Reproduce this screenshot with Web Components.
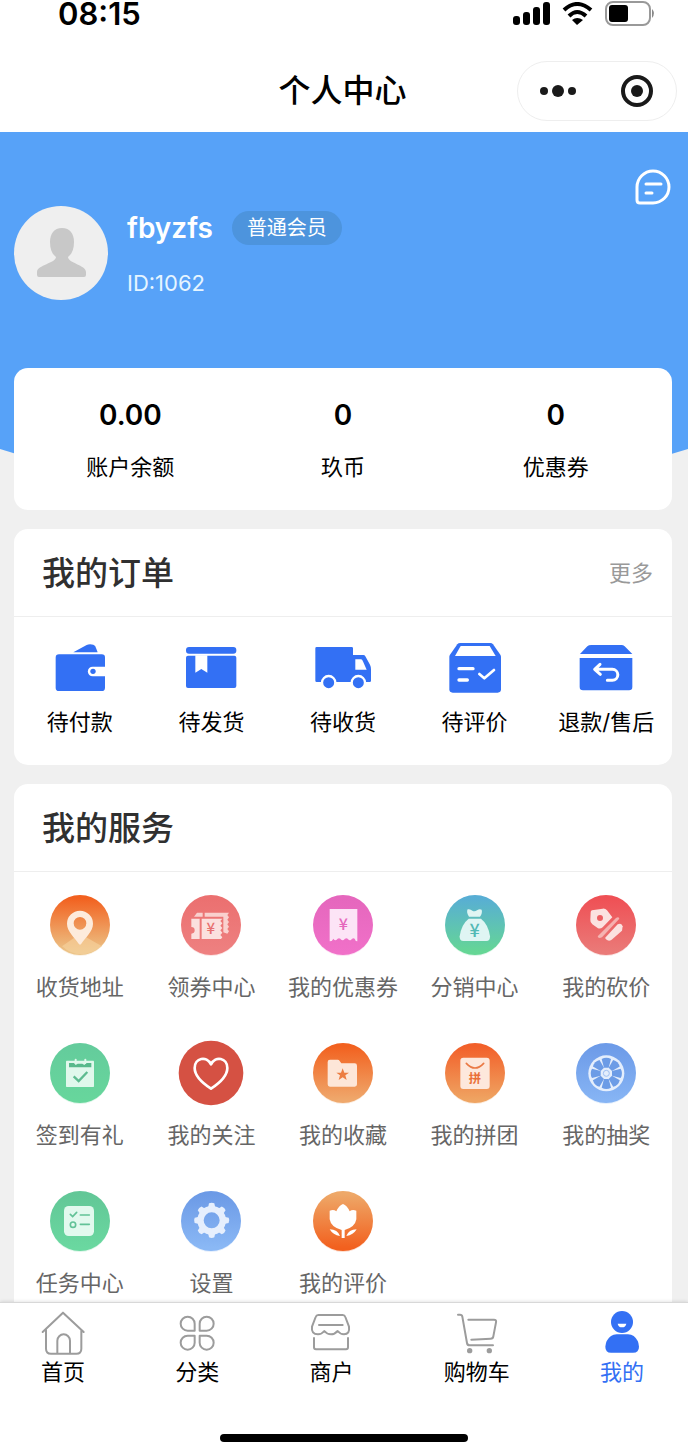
<!DOCTYPE html>
<html lang="zh-CN">
<head>
<meta charset="utf-8">
<meta name="viewport" content="width=device-width, initial-scale=1">
<title>个人中心</title>
<style>
  body { margin: 0; background: #f0f0f0; font-family: Inter, "Noto Sans CJK SC", sans-serif; color: #000; }
</style>
</head>
<body>
<member-page>
  <status-bar slot="top" time="08:15"></status-bar>
  <nav-bar slot="top">个人中心</nav-bar>

  <member-hero name="fbyzfs" level="普通会员" uid="1062">
    <stat-item value="0.00">账户余额</stat-item>
    <stat-item value="0">玖币</stat-item>
    <stat-item value="0">优惠券</stat-item>
  </member-hero>

  <panel-card heading="我的订单" more="更多">
    <icon-link kind="order" icon="pay">待付款</icon-link>
    <icon-link kind="order" icon="ship">待发货</icon-link>
    <icon-link kind="order" icon="receive">待收货</icon-link>
    <icon-link kind="order" icon="review">待评价</icon-link>
    <icon-link kind="order" icon="refund">退款/售后</icon-link>
  </panel-card>

  <panel-card class="last" heading="我的服务">
    <icon-link icon="address">收货地址</icon-link>
    <icon-link icon="tickets">领券中心</icon-link>
    <icon-link icon="coupon">我的优惠券</icon-link>
    <icon-link icon="bag">分销中心</icon-link>
    <icon-link icon="bargain">我的砍价</icon-link>
    <icon-link icon="signin">签到有礼</icon-link>
    <icon-link icon="heart">我的关注</icon-link>
    <icon-link icon="folder">我的收藏</icon-link>
    <icon-link icon="group">我的拼团</icon-link>
    <icon-link icon="wheel">我的抽奖</icon-link>
    <icon-link icon="tasks">任务中心</icon-link>
    <icon-link icon="gear">设置</icon-link>
    <icon-link icon="tulip">我的评价</icon-link>
  </panel-card>

  <tab-bar slot="bottom">
    <tab-item icon="home">首页</tab-item>
    <tab-item icon="category">分类</tab-item>
    <tab-item icon="shop">商户</tab-item>
    <tab-item icon="cart">购物车</tab-item>
    <tab-item icon="me" active>我的</tab-item>
  </tab-bar>
</member-page>

<script>
const B = '#3370f4';

const spin = (n, cx, cy, shape, start = 0) =>
  Array.from({ length: n }, (_, i) => `<g transform="rotate(${start + i * 360 / n} ${cx} ${cy})">${shape}</g>`).join('');

/* Plain glyphs: viewBox and artwork */
const GLYPHS = {
  pay: ['150 354 180 180', `<g fill="${B}"><path d="M220 397L260 375Q268 371 280 374Q287 376 288 384L293 397Z"/><rect x="167" y="403" width="148" height="110" rx="10"/></g><path fill="#fff" d="M317 440H278a14 14 0 0 0 0 29H317Z"/><circle cx="279" cy="454" r="8" fill="${B}"/>`],
  ship: ['546 354 180 180', `<g fill="${B}"><rect x="561" y="381" width="151" height="20" rx="9"/><rect x="561" y="407" width="151" height="97" rx="6"/></g><path fill="#fff" d="M589 406H625V458L607 447L589 458Z"/>`],
  receive: ['941 354 180 180', `<path fill="${B}" d="M952 381H1057Q1061 381 1061 385V405H1092Q1096 405 1098 409L1112 434Q1115 440 1115 448V482Q1115 486 1111 486H952Q948 486 948 482V385Q948 381 952 381Z"/><path fill="#fff" d="M1068 418H1084Q1088 418 1090 422L1102 449H1068Z"/><g fill="${B}" stroke="#fff" stroke-width="7"><circle cx="988" cy="488" r="20"/><circle cx="1077" cy="488" r="20"/></g>`],
  review: ['302 354 180 180', `<path fill="${B}" d="M348 369H438Q443 369 446 373L468 404Q470 407 470 411V508Q470 518 460 518H325Q315 518 315 508V411Q315 407 317 404L339 373Q342 369 348 369Z"/><path fill="#fff" d="M349 378H436L454 408H332Z"/><g fill="none" stroke="#fff" stroke-width="10" stroke-linecap="round" stroke-linejoin="round"><path d="M344 446H386M344 480H369"/><path stroke-width="8" d="M405 462L420 475L449 450"/></g>`],
  refund: ['694 354 180 180', `<g fill="${B}"><path d="M740 375H830Q836 375 840 379L863 402H706L728 379Q732 375 740 375Z"/><path d="M705 414H863V501Q863 511 853 511H715Q705 511 705 501Z"/></g><g fill="none" stroke="#fff" stroke-width="9" stroke-linecap="round" stroke-linejoin="round"><path d="M766 433L750 448L767 463M752 448H803a16 16 0 0 1 0 33H788"/></g>`],
  home: ['118 60 144 144', `<g fill="none" stroke="#9c9c9c" stroke-width="6" stroke-linecap="round" stroke-linejoin="round"><path d="M129 126L190 68L252 126M139 120V176Q139 191 154 191H230Q245 191 245 176V120M173 190V152a19 19 0 0 1 38 0V190"/></g>`],
  category: ['522 60 144 144', `<g fill="none" stroke="#9c9c9c" stroke-width="6" stroke-linejoin="round"><path d="M587 122H566a21 21 0 1 1 21-21ZM602 122H623a21 21 0 1 0-21-21ZM587 137H566a21 21 0 1 0 21 21ZM602 137H623a21 21 0 1 1-21 21Z"/></g>`],
  shop: ['924 60 144 144', `<g fill="none" stroke="#9c9c9c" stroke-width="6" stroke-linecap="round" stroke-linejoin="round"><path d="M958 75H1031Q1037 75 1039 81L1050 110Q1053 133 1035 133Q1024 133 1016 123Q1007 133 996 133Q984 133 976 123Q968 133 957 133Q936 133 939 110L950 81Q952 75 958 75ZM960 105H1031M945 144V172Q945 178 951 178H1041Q1047 178 1047 172V144"/></g>`],
  cart: ['328 60 144 144', `<g fill="none" stroke="#9c9c9c" stroke-width="6" stroke-linecap="round" stroke-linejoin="round"><path d="M343 74H349Q355 74 356 80L370 159Q371 166 378 166H448M374 89H451Q459 89 457 97L449 139Q448 146 441 146L383 149"/></g><g fill="#9c9c9c"><circle cx="378" cy="182" r="8"/><circle cx="437" cy="182" r="8"/></g>`],
  me: ['760 60 144 144', `<g fill="${B}"><circle cx="832" cy="96" r="33"/><path d="M782 170Q783 150 799 138Q806 133 816 133H850Q860 133 867 138Q882 150 883 170Q883 188 865 188H799Q782 188 782 170Z"/></g><path fill="#fff" d="M819 101H845Q843 112 832 112Q821 112 819 101Z"/>`]
};

/* Round badges: left, top, upper colour, lower colour, artwork */
const BADGES = {
  address: [141, 337, '#f2611f', '#ecc488', `<path fill="#f6d3a0" opacity=".6" d="M186 500L240 462L306 500Q240 548 186 500Z"/><path fill="#fdebdc" fill-rule="evenodd" d="M240 393a39 39 0 0 1 39 39c0 24-24 42-35 60q-4 5-8 0c-11-18-35-36-35-60a39 39 0 0 1 39-39ZM240 412a19 19 0 1 0 0 38a19 19 0 1 0 0-38Z"/>`],
  tickets: [535, 337, '#eb7070', '#ee8080', `<g fill="#fbe0de"><path d="M583 411L592 399H609V411ZM615 399H688l-5 7 5 7-5 7 5 7-5 7 5 7-5 7 5 7-5 7-12-4V411H615Z" opacity=".85"/><path d="M575 417H600V478H575V462a8 8 0 0 0 0-20ZM606 417H668l-6 7 6 7-6 7 6 7-6 7 6 7-6 7 6 7-4 5H606Z"/></g><text x="633" y="464" font-size="45" font-weight="500" text-anchor="middle" fill="#e87070">¥</text>`],
  coupon: [929, 337, '#e567bd', '#f070c8', `<path fill="#fce4f6" d="M988 388H1071V485q-6 0-8-8q-6-4-11 4q-5 2-10-4q-6-4-12 4q-5 2-10-4q-6-4-12 4q-5 2-9-4q-3 8-11 8Z"/><text x="1029" y="450" font-size="48" font-weight="500" text-anchor="middle" fill="#e567bd">¥</text>`],
  bag: [123, 337, '#58aed4', '#65d695', `<g fill="#dff5f3"><path d="M200 389Q208 387 214 393Q221 397 228 392Q236 386 242 390Q245 400 237 411H204Q195 398 200 389Z"/><path d="M203 417H240Q262 434 267 470Q268 484 256 484H187Q175 484 176 470Q181 434 203 417Z"/></g><text x="221" y="473" font-size="54" font-weight="500" text-anchor="middle" fill="#53b9b5">¥</text>`],
  bargain: [517, 337, '#ef5055', '#ea7a78', `<g fill="#fbe2e0"><path fill-rule="evenodd" d="M574 392L606 387Q614 386 619 392L635 413L606 443Q600 448 592 446L575 434Q568 428 569 420L570 398Q570 393 574 392ZM598 406a9 9 0 1 0 0 18a9 9 0 1 0 0-18Z"/><path opacity=".6" d="M591 470L646 415Q654 410 656 417L604 473Q592 478 591 470Z"/><path d="M613 475L651 434Q663 428 666 440L664 453L632 481Q621 487 613 475Z"/></g>`],
  signin: [141, 60, '#64cc9c', '#67d69c', `<g fill="#e0f8ec"><rect x="198" y="122" width="84" height="79" rx="2"/></g><path fill="#58b98c" d="M207 129H222l5 6 6-4H247l6 4 6-6H274V142H207Z"/><g fill="#e0f8ec"><rect x="224" y="116" width="6" height="16" rx="3"/><rect x="253" y="116" width="6" height="16" rx="3"/></g><path d="M221 169L236 183L262 156" fill="none" stroke="#5dbb90" stroke-width="7"/>`],
  heart: [536, 60, '#d55143', '#d55143', `<path fill="none" stroke="#fff" stroke-width="8" stroke-linejoin="round" d="M635 206C612 191 586 168 586 144C586 114 622 106 635 133C648 106 684 114 684 144C684 168 658 191 635 206Z"/>`],
  folder: [929, 60, '#f2611f', '#efa86c', `<path fill="#fde6d8" d="M982 126Q982 119 989 119H1012Q1016 119 1018 123L1023 130H1063Q1070 130 1070 137V193Q1070 200 1063 200H989Q982 200 982 193Z"/><path fill="#ec7d42" d="M1027 145l5 13h14l-11 8 4 14-12-8-12 8 4-14-11-8h14Z"/>`],
  group: [123, 60, '#f2602a', '#efa462', `<rect x="178" y="113" width="88" height="94" rx="9" fill="#fde8dc"/><path d="M196 130Q222 158 248 130" fill="none" stroke="#ea7a45" stroke-width="5" stroke-linecap="round"/><text x="222" y="190" font-size="37" font-weight="700" text-anchor="middle" fill="#ea6f38">拼</text>`],
  wheel: [519, 60, '#6d9be8', '#86b4f4', `<circle cx="619" cy="160" r="54" fill="#e4eefc"/>${spin(8, 619, 160, '<path d="M612 143L605 117Q619 109 633 117L626 143Z" fill="#6c9ce6"/>')}<circle cx="619" cy="160" r="9" fill="none" stroke="#9fc0f2" stroke-width="3"/>`],
  tasks: [141, 504, '#62c797', '#6ad8a0', `<rect x="192" y="558" width="90" height="90" rx="14" fill="#e2f9ee"/><g fill="none" stroke="#62c297" stroke-width="5" stroke-linecap="round"><path d="M211 583L218 590L230 577M241 585H268M241 613H268"/><circle cx="219" cy="614" r="8"/></g>`],
  gear: [537, 504, '#6c9ae6', '#8ab8f5', `<g fill="#e6effd">${spin(8, 638, 601, '<path d="M627 564L630 550Q638 546 646 550L649 564Z"/>')}<path fill-rule="evenodd" d="M638 558a43 43 0 1 0 0 86a43 43 0 1 0 0-86ZM638 577a24 24 0 1 1 0 48a24 24 0 1 1 0-48Z"/></g>`],
  tulip: [931, 504, '#eea868', '#f2601e', `<g fill="#fff"><path d="M990 572Q1002 567 1010 574Q1018 556 1030 552Q1042 556 1050 574Q1058 567 1070 572V598Q1066 622 1035 630V654H1026V630Q994 622 990 598Z"/><path d="M990 628Q1014 629 1021 648Q1000 645 990 628ZM1071 628Q1047 629 1040 648Q1061 645 1071 628Z"/></g>`]
};

class Base extends HTMLElement {
  connectedCallback() {
    if (this.shadowRoot) return;
    this.attachShadow({ mode: 'open' }).innerHTML =
      `<style>:host, * { box-sizing: border-box; } :host { display: block; } svg { display: block; } a { color: inherit; text-decoration: none; } button { border: 0; padding: 0; background: none; font: inherit; color: inherit; }${this.css()}</style>${this.html()}`;
  }
  css() { return ''; }
  html() { return '<slot></slot>'; }
}

customElements.define('glyph-icon', class extends Base {
  css() { return 'svg { width: 100%; height: 100%; }'; }
  html() {
    const [box, art] = GLYPHS[this.getAttribute('name')];
    return `<svg viewBox="${box}" aria-hidden="true">${art}</svg>`;
  }
});

customElements.define('badge-icon', class extends Base {
  css() { return 'svg { width: 100%; height: 100%; overflow: visible; font-family: "Noto Sans CJK SC", sans-serif; }'; }
  html() {
    const name = this.getAttribute('name');
    const [x, y, from, to, art] = BADGES[name];
    const big = name === 'heart';
    const shade = big ? '' : `<circle cx="${x + 99}" cy="${y + 104}" r="88" fill="${to}" opacity=".22"/>`;
    return `<svg viewBox="${x} ${y} 198 198" aria-hidden="true">
      <defs><linearGradient id="g" x1="0" y1="0" x2="0" y2="1"><stop offset=".05" stop-color="${from}"/><stop offset=".95" stop-color="${to}"/></linearGradient></defs>
      ${shade}<circle cx="${x + 99}" cy="${y + 99}" r="${big ? 97 : 90}" fill="url(#g)"/>${art}</svg>`;
  }
});

customElements.define('member-page', class extends Base {
  css() { return `
    :host { display: flex; flex-direction: column; min-height: 100vh; }
    main { flex: 1; display: flex; flex-direction: column; gap: 19px; }
    ::slotted(.last) { flex: 1; }
    footer { position: sticky; bottom: 0; }`; }
  html() { return '<header><slot name="top"></slot></header><main><slot></slot></main><footer><slot name="bottom"></slot></footer>'; }
});

customElements.define('status-bar', class extends Base {
  css() { return `
    :host { display: flex; justify-content: space-between; align-items: flex-start; height: 60px; padding: 0 32px 0 58px; background: #fff; }
    time { font-size: 31px; font-weight: 600; line-height: 28px; }
    div { display: flex; align-items: center; gap: 12px; height: 26px; }`; }
  html() { return `<time>${this.getAttribute('time')}</time>
    <div>
      <svg width="37" height="23" viewBox="0 0 37 23"><rect x="0" y="14" width="7" height="9" rx="3"/><rect x="10" y="10" width="7" height="13" rx="3"/><rect x="20" y="5" width="7" height="18" rx="3"/><rect x="30" y="0" width="7" height="23" rx="3"/></svg>
      <svg width="31" height="23" viewBox="0 0 31 23"><g fill="none" stroke="#000" stroke-width="4"><path d="M2 8Q15 -4 29 8M7 14Q15 6 24 14"/></g><path d="M10 18Q15 14 21 18L15 23Z"/></svg>
      <svg width="51" height="25" viewBox="0 0 51 25"><rect x="1" y="1" width="44" height="23" rx="7" fill="#fff" stroke="#999" stroke-width="2"/><rect x="4" y="4" width="19" height="17" rx="3"/><path d="M47 8Q51 12 47 17Z" fill="#888"/></svg>
    </div>`; }
});

customElements.define('nav-bar', class extends Base {
  css() { return `
    :host { display: grid; grid-template-columns: 1fr auto 1fr; align-items: center; height: 72px; padding: 0 11px 10px 8px; background: #fff; }
    h1 { grid-column: 2; margin: 0; font-size: 32px; font-weight: 500; line-height: 62px; }
    .capsule { justify-self: end; display: flex; justify-content: space-between; align-items: center; width: 160px; height: 60px; padding: 0 22px; border: 1px solid #eeeeee; border-radius: 30px; background: #fff; }`; }
  html() { return `<h1><slot></slot></h1>
    <div class="capsule">
      <button aria-label="更多"><svg width="36" height="34" viewBox="0 0 36 34" fill="#1a1a1a"><circle cx="4" cy="17" r="4"/><circle cx="18" cy="17" r="6"/><circle cx="32" cy="17" r="4"/></svg></button>
      <button aria-label="关闭"><svg width="34" height="34" viewBox="0 0 34 34"><circle cx="17" cy="17" r="14" fill="none" stroke="#1a1a1a" stroke-width="4"/><circle cx="17" cy="17" r="6" fill="#1a1a1a"/></svg></button>
    </div>`; }
});

customElements.define('member-hero', class extends Base {
  css() { return `
    :host { position: relative; padding: 36px 16px 0 14px; }
    .back { position: absolute; z-index: -1; left: 0; top: 0; width: 100%; height: 372px; }
    .chat { display: block; margin-left: auto; }
    .who { display: flex; gap: 18px; margin-bottom: 67px; }
    .avatar { flex: none; width: 95px; height: 95px; }
    .text { color: #fff; }
    .line { display: flex; align-items: center; gap: 19px; height: 44px; }
    h2 { margin: 0; font-size: 28px; font-weight: 600; line-height: 40px; }
    .pill { padding: 0 15px; border-radius: 17px; background: #4d94dd; font-size: 20px; line-height: 34px; }
    p { margin: 17px 0 0; font-size: 22px; line-height: 32px; color: #e6f5ff; }
    .stats { display: grid; grid-template-columns: repeat(3, 1fr); padding: 29px 10px 27px; border-radius: 14px; background: #fff; }`; }
  html() { return `
    <svg class="back" viewBox="0 0 688 372" preserveAspectRatio="none"><path fill="#57a2f8" d="M0 0H688V317Q344 427 0 317Z"/></svg>
    <button class="chat" aria-label="消息"><svg width="38" height="38" viewBox="0 0 38 38" fill="none" stroke="#fff" stroke-width="3" stroke-linecap="round" stroke-linejoin="round"><path d="M19 3a16 16 0 1 1 0 32H6Q3 35 3 32V19A16 16 0 0 1 19 3ZM12 16H27M12 25H18"/></svg></button>
    <div class="who">
      <svg class="avatar" viewBox="0 0 95 95"><circle cx="47" cy="47" r="47" fill="#efefef"/><path fill="#c8c8c8" d="M48 22C56 22 60 28 60 36C60 43 58 48 54 51C54 57 72 59 72 66V69Q72 71 70 71H25Q23 71 23 69V66C23 59 42 57 42 51C38 48 36 43 36 36C36 28 40 22 48 22Z"/></svg>
      <div class="text">
        <div class="line"><h2>${this.getAttribute('name')}</h2><span class="pill">${this.getAttribute('level')}</span></div>
        <p>ID:${this.getAttribute('uid')}</p>
      </div>
    </div>
    <div class="stats"><slot></slot></div>`; }
});

customElements.define('stat-item', class extends Base {
  css() { return `
    a { display: flex; flex-direction: column; align-items: center; gap: 18px; }
    strong { font-size: 28px; font-weight: 600; line-height: 36px; }
    span { font-size: 22px; line-height: 32px; }`; }
  html() { return `<a href="#"><strong>${this.getAttribute('value')}</strong><span><slot></slot></span></a>`; }
});

customElements.define('panel-card', class extends Base {
  css() { return `
    :host { margin: 0 16px 0 14px; border-radius: 14px; background: #fff; }
    :host(.last) { border-radius: 14px 14px 0 0; }
    header { display: flex; justify-content: space-between; align-items: center; height: 88px; padding: 0 19px 0 28px; border-bottom: 1px solid #eeeeee; }
    h2 { margin: 0; font-size: 33px; font-weight: 500; line-height: 40px; color: #303030; }
    header a { font-size: 22px; line-height: 32px; color: #999; }
    .grid { display: grid; grid-template-columns: repeat(5, 1fr); row-gap: 37px; padding: 20px 0 27px; }
    :host(.last) .grid { padding-bottom: 3px; }`; }
  html() {
    const more = this.getAttribute('more');
    return `<header><h2>${this.getAttribute('heading')}</h2>${more ? `<a href="#">${more}</a>` : ''}</header><div class="grid"><slot></slot></div>`;
  }
});

customElements.define('icon-link', class extends Base {
  css() { return `
    a { display: flex; flex-direction: column; align-items: center; gap: 13px; font-size: 22px; line-height: 32px; color: #666; white-space: nowrap; }
    badge-icon { width: 66px; height: 66px; }
    glyph-icon { width: 60px; height: 60px; }
    :host([kind="order"]) a { gap: 8px; padding-top: 1px; color: #000; }`; }
  html() {
    const tag = this.getAttribute('kind') === 'order' ? 'glyph-icon' : 'badge-icon';
    return `<a href="#"><${tag} name="${this.getAttribute('icon')}"></${tag}><span><slot></slot></span></a>`;
  }
});

customElements.define('tab-bar', class extends Base {
  css() { return `
    :host { background: #fff; border-top: 1px solid #d8d8d8; box-shadow: 0 -1px 3px #00000018; }
    nav { display: flex; justify-content: space-between; padding: 7px 44px 48px 41px; }
    .home { width: 36%; height: 8px; margin: 0 auto; border-radius: 4px; background: #000; }`; }
  html() { return '<nav><slot></slot></nav><div class="home"></div>'; }
});

customElements.define('tab-item', class extends Base {
  css() { return `
    a { display: flex; flex-direction: column; align-items: center; font-size: 22px; line-height: 28px; }
    glyph-icon { width: 48px; height: 48px; margin: 0 -2px; }
    :host([active]) { color: ${B}; }`; }
  html() { return `<a href="#"><glyph-icon name="${this.getAttribute('icon')}"></glyph-icon><span><slot></slot></span></a>`; }
});
</script>
</body>
</html>
